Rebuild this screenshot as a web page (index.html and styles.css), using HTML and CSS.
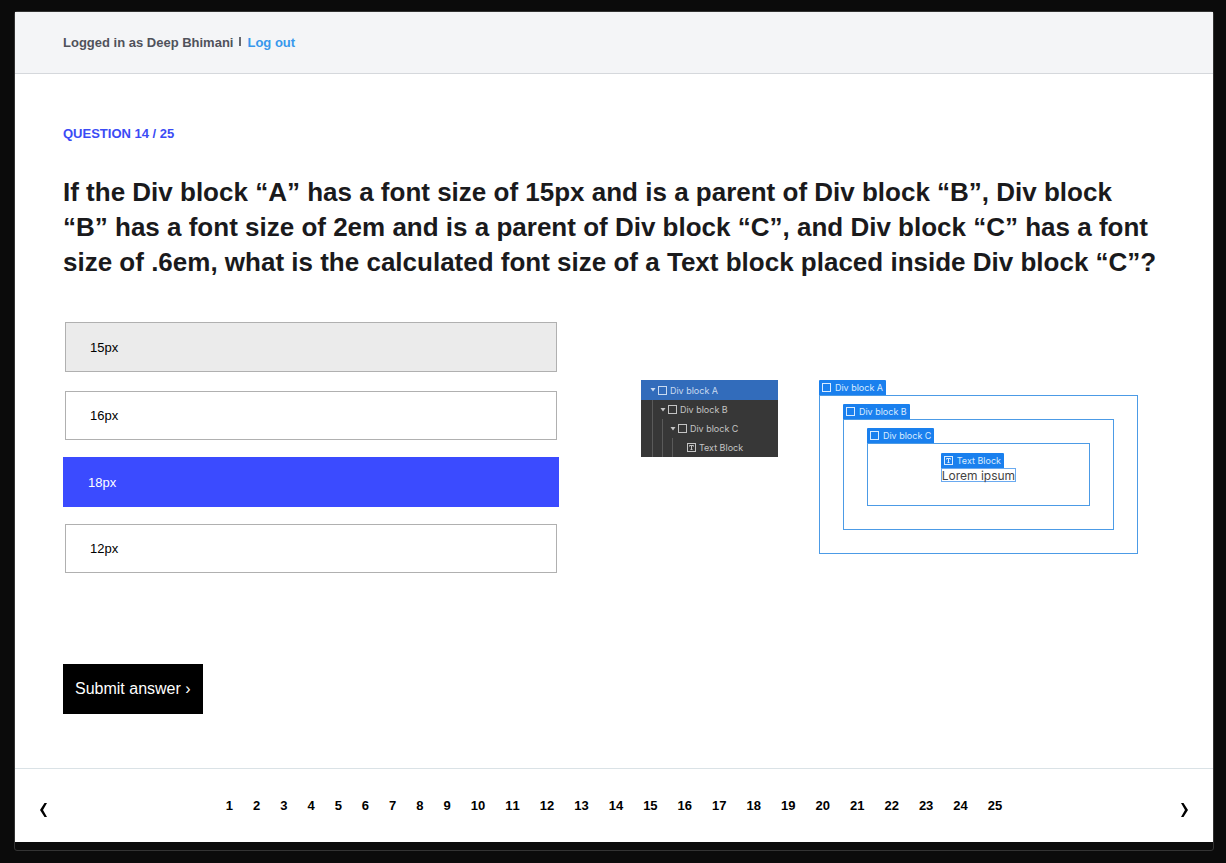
FILE: index.html
```html
<!DOCTYPE html>
<html lang="en">
<head>
<meta charset="utf-8">
<title>Question 14 / 25</title>
<link rel="stylesheet" href="styles.css">
</head>
<body>
<div class="window">
  <header class="topbar">
    <span class="user">Logged in as Deep Bhimani</span>
    <span class="divider"></span>
    <a class="logout" href="#logout">Log out</a>
  </header>

  <main class="main">
    <p class="counter">QUESTION 14 / 25</p>
    <h1 class="question" id="question">If the Div block “A” has a font size of 15px and is a parent of Div block “B”, Div block<br> “B” has a font size of 2em and is a parent of Div block “C”, and Div block “C” has a font<br> size of .6em, what is the calculated font size of a Text block placed inside Div block “C”?</h1>

    <form class="quiz">
      <div class="columns">
        <div class="options" role="radiogroup" aria-labelledby="question">
          <label class="option active"><input type="radio" name="answer" value="15">15px</label>
          <label class="option"><input type="radio" name="answer" value="16">16px</label>
          <label class="option"><input type="radio" name="answer" value="18" checked>18px</label>
          <label class="option"><input type="radio" name="answer" value="12">12px</label>
        </div>

        <div class="figure">
          <div class="tree">
            <div class="row level-a"><svg class="caret" viewBox="0 0 6 4"><path d="M.5 0h5L3 3.5z"/></svg><svg class="icon" viewBox="0 0 9 9"><rect x=".5" y=".5" width="8" height="8"/></svg>Div block A</div>
            <div class="row level-b"><i class="guide"></i><svg class="caret" viewBox="0 0 6 4"><path d="M.5 0h5L3 3.5z"/></svg><svg class="icon" viewBox="0 0 9 9"><rect x=".5" y=".5" width="8" height="8"/></svg>Div block B</div>
            <div class="row level-c"><i class="guide"></i><i class="guide"></i><svg class="caret" viewBox="0 0 6 4"><path d="M.5 0h5L3 3.5z"/></svg><svg class="icon" viewBox="0 0 9 9"><rect x=".5" y=".5" width="8" height="8"/></svg>Div block C</div>
            <div class="row level-text"><i class="guide"></i><i class="guide"></i><i class="guide"></i><svg class="icon" viewBox="0 0 9 9"><rect x=".5" y=".5" width="8" height="8"/><path d="M2.5 3.5v-1h4v1M4.5 2.5v4M3.5 6.5h2"/></svg>Text Block</div>
          </div>

          <div class="node outer">
            <div class="tag"><svg class="icon" viewBox="0 0 9 9"><rect x=".5" y=".5" width="8" height="8"/></svg>Div block A</div>
            <div class="box">
              <div class="node">
                <div class="tag"><svg class="icon" viewBox="0 0 9 9"><rect x=".5" y=".5" width="8" height="8"/></svg>Div block B</div>
                <div class="box">
                  <div class="node">
                    <div class="tag"><svg class="icon" viewBox="0 0 9 9"><rect x=".5" y=".5" width="8" height="8"/></svg>Div block C</div>
                    <div class="box inner">
                      <div class="node leaf">
                        <div class="tag"><svg class="icon" viewBox="0 0 9 9"><rect x=".5" y=".5" width="8" height="8"/><path d="M2.5 3.5v-1h4v1M4.5 2.5v4M3.5 6.5h2"/></svg>Text Block</div>
                        <div class="lorem">Lorem ipsum</div>
                      </div>
                    </div>
                  </div>
                </div>
              </div>
            </div>
          </div>
        </div>
      </div>

      <button class="submit" type="submit">Submit answer ›</button>
    </form>
  </main>

  <nav class="pager" aria-label="Questions">
    <button class="arrow" type="button" aria-label="Previous question"><svg viewBox="0 0 7 14"><path d="M4.5 0H7L3 7l4 7H4.500L0 7z"/></svg></button>
    <div class="pages">
      <a href="#1">1</a><a href="#2">2</a><a href="#3">3</a><a href="#4">4</a><a href="#5">5</a><a href="#6">6</a><a href="#7">7</a><a href="#8">8</a><a href="#9">9</a><a href="#10">10</a><a href="#11">11</a><a href="#12">12</a><a href="#13">13</a><a href="#14">14</a><a href="#15">15</a><a href="#16">16</a><a href="#17">17</a><a href="#18">18</a><a href="#19">19</a><a href="#20">20</a><a href="#21">21</a><a href="#22">22</a><a href="#23">23</a><a href="#24">24</a><a href="#25">25</a>
    </div>
    <button class="arrow" type="button" aria-label="Next question"><svg viewBox="0 0 7 14"><path d="M2.500 0H0l4 7-4 7h2.500L7 7z"/></svg></button>
  </nav>
</div>
</body>
</html>
```

FILE: styles.css
```css
* { box-sizing: border-box; }

body {
  margin: 0;
  min-height: 100vh;
  padding: 11px 12px 12px 14px;
  display: flex;
  background: #0b0b0b;
  color: #1a1a1c;
  font-family: "Liberation Sans", Arial, sans-serif;
  font-size: 13px;
}

.window {
  flex: 1;
  min-width: 0;
  display: flex;
  flex-direction: column;
  padding-bottom: 8px;
  border: 1px solid #333;
  border-radius: 3px;
}

.topbar {
  display: flex;
  align-items: center;
  gap: 6px;
  height: 62px;
  padding: 0 48px;
  background: #f4f5f7;
  border-bottom: 1px solid #d5d8dc;
  font-weight: bold;
}

.user { color: #50525b; }
.divider { width: 2px; height: 9px; margin-bottom: 2px; background: #676970; }
.logout { color: #3898ec; text-decoration: none; }

.main {
  flex: 1;
  padding: 52px 48px 54px;
  background: #fff;
}

.counter {
  margin: 0;
  line-height: 16px;
  font-weight: bold;
  color: #3b4bf5;
}

.question {
  margin: 33px 0 42px;
  font-size: 26px;
  line-height: 35px;
  font-weight: bold;
}

.columns {
  display: grid;
  grid-template-columns: 45% 1fr;
}

.options {
  display: flex;
  flex-direction: column;
  gap: 17px;
}

.option {
  display: flex;
  align-items: center;
  height: 49px;
  margin: 0 2px;
  padding: 0 24px;
  border: 1px solid #b0b0b0;
  color: #000;
}

.option input {
  appearance: none;
  position: absolute;
  margin: 0;
}

.option.active {
  height: 50px;
  margin-bottom: 2px;
  background: #ebebeb;
}

.option:has(input:checked) {
  height: 50px;
  margin: 0;
  border-color: #3b4bff;
  background: #3b4bff;
  color: #fff;
}

.figure {
  display: flex;
  align-items: flex-start;
  gap: 41px;
  padding: 58px 27px 0 82px;
  font-family: Inter, sans-serif;
  font-size: 9px;
}

.icon {
  flex: none;
  width: 9px;
  height: 9px;
  fill: none;
  stroke: currentColor;
}

.tree {
  width: 137px;
  background: #373737;
  color: #c4c4c4;
}

.row {
  display: flex;
  align-items: center;
  height: 19px;
  padding-left: 9px;
}

.row .icon { margin: 0 3px 0 2px; }
.caret { width: 6px; height: 4px; fill: currentColor; }
.level-a { height: 20px; background: #326cbb; color: #c9daf0; }

.guide {
  align-self: stretch;
  width: 10px;
  border-left: 1px solid #5a5a5a;
  margin-left: 2px;
  margin-right: -2px;
}

.level-text .icon { margin-left: 7px; }

.node { display: flex; flex-direction: column; align-items: flex-start; }
.outer { flex: 1; }

.tag {
  display: flex;
  align-items: center;
  gap: 4px;
  height: 15px;
  padding: 0 3px;
  border-radius: 1px 1px 0 0;
  background: #1a80ee;
  color: #d9ebff;
}

.box {
  align-self: stretch;
  padding: 8px 23px 23px;
  border: 1px solid #4c9be6;
}

.inner { padding-top: 9px; }

.leaf { width: fit-content; margin: 0 auto; }

.lorem {
  height: 14px;
  border: 1px solid #6aaaf0;
  font-size: 12px;
  line-height: 13px;
  color: #444;
}

.submit {
  display: block;
  height: 50px;
  margin-top: 91px;
  padding: 0 12px;
  border: 0;
  background: #000;
  color: #fff;
  font-family: inherit;
  font-size: 16px;
}

.pager {
  display: flex;
  align-items: center;
  justify-content: space-between;
  height: 74px;
  padding: 0 25px;
  border-top: 1px solid #dae2e6;
  background: #fff;
}

.pages {
  display: flex;
  gap: 20px;
  padding-bottom: 1px;
  font-kerning: none;
}

.pages a {
  color: #000;
  font-weight: bold;
  text-decoration: none;
}

.arrow {
  padding: 8px 0 0;
  border: 0;
  background: none;
}

.arrow svg { display: block; width: 7px; height: 14px; }
```
